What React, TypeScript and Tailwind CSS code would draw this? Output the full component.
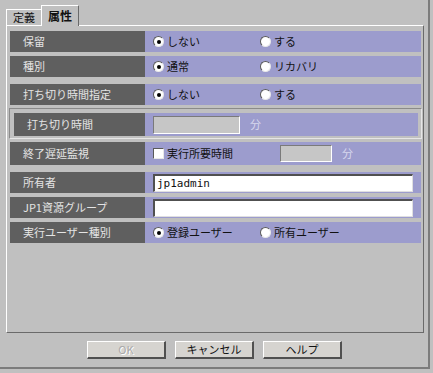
import React from "react";

const FONT = { fontFamily: '"Noto Sans CJK JP", "Noto Sans", sans-serif' };

function Radio({ checked }: { checked?: boolean }) {
  return (
    <span className="relative inline-block w-[11px] h-[11px] rounded-full bg-white border border-t-[#5a5a5a] border-l-[#5a5a5a] border-b-[#e8e8e8] border-r-[#e8e8e8] shrink-0">
      {checked && (
        <span className="absolute left-[2.5px] top-[2.5px] w-[4px] h-[4px] rounded-full bg-black" />
      )}
    </span>
  );
}

function Opt({ checked, label, w }: { checked?: boolean; label: string; w?: string }) {
  return (
    <div className={`flex items-center gap-[3px] ${w ?? ""}`}>
      <Radio checked={checked} />
      <span className="text-[11px] text-[#111] leading-none">{label}</span>
    </div>
  );
}

function Row({
  label,
  children,
  h = "h-[21px]",
  className = "",
  labelW = "w-[135px]",
}: {
  label: string;
  children?: React.ReactNode;
  h?: string;
  className?: string;
  labelW?: string;
}) {
  return (
    <div className={`flex ${h} ${className}`}>
      <div className={`${labelW} shrink-0 bg-[#5f5f5f] flex items-center pl-[13px] text-[11px] text-[#e4e4e4] leading-none`}>
        {label}
      </div>
      <div className="flex-1 bg-[#9c9ccd] flex items-center pl-[8px]">{children}</div>
    </div>
  );
}

function Btn({ label, disabled }: { label: string; disabled?: boolean }) {
  return (
    <div className="w-[79px] h-[18px] bg-[#d6d4d0] border-t border-l border-t-white border-l-white border-b-2 border-r-2 border-b-[#505050] border-r-[#505050] flex items-center justify-center">
      <span
        className={`text-[11px] leading-none ${disabled ? "text-[#a9a9a9] [text-shadow:1px_1px_0_#ffffff]" : "text-[#111]"}`}
      >
        {label}
      </span>
    </div>
  );
}

export default function App() {
  return (
    <div className="w-[433px] h-[373px] bg-[#c0c0c0] overflow-hidden" style={FONT}>
      <div className="w-[430px] h-[369px] border-r-2 border-b-2 border-r-[#7c7c7c] border-b-[#7c7c7c] flex flex-col">
        {/* tabs */}
        <div className="h-[25px] flex items-end pl-[6px]">
          <div className="w-[36px] h-[16px] border-t border-l border-t-white border-l-white border-r border-r-[#808080] flex items-center justify-center text-[11px] text-[#111] leading-none">
            定義
          </div>
          <div className="w-[38px] h-[21px] -ml-[1px] border-t border-l border-t-white border-l-white border-r border-r-[#6a6a6a] flex items-center justify-center text-[12px] font-bold text-[#111] leading-none bg-[#c0c0c0] relative top-[1px] z-10">
            属性
          </div>
        </div>

        {/* panel */}
        <div className="ml-[6px] w-[418px] h-[308px] border-t border-l border-t-white border-l-white border-b border-r border-b-[#6a6a6a] border-r-[#6a6a6a] pl-[3px] pr-[2px] pt-[5px] flex flex-col">
          <Row label="保留">
            <Opt checked label="しない" w="w-[107px]" />
            <Opt label="する" />
          </Row>
          <Row label="種別" className="mt-[4px]">
            <Opt checked label="通常" w="w-[107px]" />
            <Opt label="リカバリ" />
          </Row>
          <Row label="打ち切り時間指定" className="mt-[7px]">
            <Opt checked label="しない" w="w-[107px]" />
            <Opt label="する" />
          </Row>

          <div className="mt-[3px] -ml-[1px] -mr-[1px] border border-t-[#8a8a8a] border-l-[#8a8a8a] border-b-[#e6e6e6] border-r-[#e6e6e6] pl-[4px] pr-[3px] pt-[4px] pb-[2px]">
            <Row label="打ち切り時間" h="h-[23px]" labelW="w-[131px]">
              <div className="w-[87px] h-[18px] bg-[#c6c6c6] border-t border-l border-t-[#7a7a7a] border-l-[#7a7a7a] border-b border-r border-b-white border-r-white" />
              <span className="ml-[10px] text-[11px] text-[#d8d8ee] leading-none">分</span>
            </Row>
          </div>

          <Row label="終了遅延監視" h="h-[23px]" className="mt-[3px]">
            <span className="w-[11px] h-[11px] bg-white border border-t-[#5a5a5a] border-l-[#5a5a5a] border-b-[#e8e8e8] border-r-[#e8e8e8] shrink-0" />
            <span className="ml-[3px] text-[11px] text-[#111] leading-none w-[113px]">実行所要時間</span>
            <div className="w-[52px] h-[17px] bg-[#c6c6c6] border-t border-l border-t-[#7a7a7a] border-l-[#7a7a7a] border-b border-r border-b-white border-r-white" />
            <span className="ml-[10px] text-[11px] text-[#d8d8ee] leading-none">分</span>
          </Row>

          <Row label="所有者" className="mt-[7px]">
            <div className="w-[260px] h-[18px] bg-white border-t-2 border-l-2 border-t-[#505050] border-l-[#505050] border-b border-r border-b-[#e0e0e0] border-r-[#e0e0e0] flex items-center pl-[2px]">
              <span className="text-[11px] text-[#111] leading-none" style={{ fontFamily: '"DejaVu Sans Mono", monospace' }}>
                jp1admin
              </span>
            </div>
          </Row>
          <Row label="JP1資源グループ" className="mt-[4px]">
            <div className="w-[260px] h-[18px] bg-white border-t-2 border-l-2 border-t-[#505050] border-l-[#505050] border-b border-r border-b-[#e0e0e0] border-r-[#e0e0e0]" />
          </Row>
          <Row label="実行ユーザー種別" className="mt-[4px]">
            <Opt checked label="登録ユーザー" w="w-[107px]" />
            <Opt label="所有ユーザー" />
          </Row>
        </div>

        {/* buttons */}
        <div className="mt-[8px] flex justify-center gap-[9px] pl-[1px]">
          <Btn label="OK" disabled />
          <Btn label="キャンセル" />
          <Btn label="ヘルプ" />
        </div>
      </div>
    </div>
  );
}
